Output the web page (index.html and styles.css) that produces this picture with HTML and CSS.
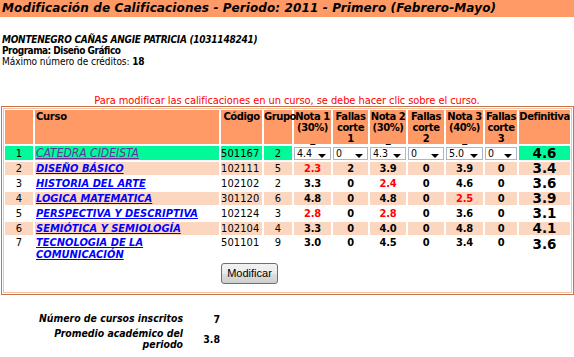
FILE: index.html
```html
<!DOCTYPE html>
<html lang="es">
<head>
<meta charset="utf-8">
<title>Modificación de Calificaciones</title>
<link rel="stylesheet" href="styles.css">
</head>
<body>
<h1 class="title">Modificación de Calificaciones - Periodo: 2011 - Primero (Febrero-Mayo)</h1>
<div class="student">
  <div class="name">MONTENEGRO CAÑAS ANGIE PATRICIA (1031148241)</div>
  <div class="prog">Programa: Diseño Gráfico</div>
  <div class="max">Máximo número de créditos: <b>18</b></div>
</div>
<p class="notice">Para modificar las calificaciones en un curso, se debe hacer clic sobre el curso.</p>
<div class="box">
  <div class="box-inner">
  <table class="grades">
    <colgroup>
      <col class="c-n"><col class="c-curso"><col class="c-cod"><col class="c-gr">
      <col class="c-n1"><col class="c-f1"><col class="c-n2"><col class="c-f2">
      <col class="c-n3"><col class="c-f3"><col class="c-def">
    </colgroup>
    <thead>
      <tr>
        <th></th>
        <th class="left">Curso</th>
        <th>Código</th>
        <th>Grupo</th>
        <th>Nota 1<br>(30%)<br>_</th>
        <th>Fallas<br>corte<br>1</th>
        <th>Nota 2<br>(30%)<br>_</th>
        <th>Fallas<br>corte<br>2</th>
        <th>Nota 3<br>(40%)<br>_</th>
        <th>Fallas<br>corte<br>3</th>
        <th>Definitiva</th>
      </tr>
    </thead>
    <tbody>
      <tr class="sel-row">
        <td class="num">1</td>
        <td class="curso"><a class="visited" href="#">CATEDRA CIDEISTA</a></td>
        <td class="cod">501167</td>
        <td class="num">2</td>
        <td class="pick"><span class="sel">4.4<i class="arr"></i></span></td>
        <td class="pick"><span class="sel">0<i class="arr"></i></span></td>
        <td class="pick"><span class="sel">4.3<i class="arr"></i></span></td>
        <td class="pick"><span class="sel">0<i class="arr"></i></span></td>
        <td class="pick"><span class="sel">5.0<i class="arr"></i></span></td>
        <td class="pick"><span class="sel">0<i class="arr"></i></span></td>
        <td class="def">4.6</td>
      </tr>
      <tr class="alt">
        <td class="num">2</td>
        <td class="curso"><a href="#">DISEÑO BÁSICO</a></td>
        <td class="cod">102111</td>
        <td class="num">5</td>
        <td class="g low">2.3</td><td class="g">2</td><td class="g">3.9</td><td class="g">0</td><td class="g">3.9</td><td class="g">0</td>
        <td class="def">3.4</td>
      </tr>
      <tr>
        <td class="num">3</td>
        <td class="curso"><a href="#">HISTORIA DEL ARTE</a></td>
        <td class="cod">102102</td>
        <td class="num">2</td>
        <td class="g">3.3</td><td class="g">0</td><td class="g low">2.4</td><td class="g">0</td><td class="g">4.6</td><td class="g">0</td>
        <td class="def">3.6</td>
      </tr>
      <tr class="alt">
        <td class="num">4</td>
        <td class="curso"><a href="#">LOGICA MATEMATICA</a></td>
        <td class="cod">301120</td>
        <td class="num">6</td>
        <td class="g">4.8</td><td class="g">0</td><td class="g">4.8</td><td class="g">0</td><td class="g low">2.5</td><td class="g">0</td>
        <td class="def">3.9</td>
      </tr>
      <tr>
        <td class="num">5</td>
        <td class="curso"><a href="#">PERSPECTIVA Y DESCRIPTIVA</a></td>
        <td class="cod">102124</td>
        <td class="num">3</td>
        <td class="g low">2.8</td><td class="g">0</td><td class="g low">2.8</td><td class="g">0</td><td class="g">3.6</td><td class="g">0</td>
        <td class="def">3.1</td>
      </tr>
      <tr class="alt">
        <td class="num">6</td>
        <td class="curso"><a href="#">SEMIÓTICA Y SEMIOLOGÍA</a></td>
        <td class="cod">102104</td>
        <td class="num">4</td>
        <td class="g">3.3</td><td class="g">0</td><td class="g">4.0</td><td class="g">0</td><td class="g">4.8</td><td class="g">0</td>
        <td class="def">4.1</td>
      </tr>
      <tr class="top">
        <td class="num">7</td>
        <td class="curso"><a href="#">TECNOLOGIA DE LA COMUNICACIÓN</a></td>
        <td class="cod">501101</td>
        <td class="num">9</td>
        <td class="g">3.0</td><td class="g">0</td><td class="g">4.5</td><td class="g">0</td><td class="g">3.4</td><td class="g">0</td>
        <td class="def">3.6</td>
      </tr>
      <tr class="btn-row">
        <td colspan="2"></td>
        <td colspan="9"><button class="btn" type="button">Modificar</button></td>
      </tr>
    </tbody>
  </table>
  </div>
</div>
<table class="summary">
  <tr><th>Número de cursos inscritos</th><td>7</td></tr>
  <tr><th>Promedio académico del periodo</th><td>3.8</td></tr>
</table>
</body>
</html>
```
FILE: styles.css
```css
html, body {
  margin: 0;
  padding: 0;
  background: #fff;
}
body {
  font-family: "DejaVu Sans Condensed", "DejaVu Sans", sans-serif;
  font-size: 10px;
  color: #000;
  width: 574px;
}
.title {
  margin: 0;
  height: 17px;
  line-height: 17px;
  background: #ff9966;
  font-family: "DejaVu Sans", Verdana, sans-serif;
  font-size: 12px;
  letter-spacing: 0.12px;
  font-weight: bold;
  font-style: italic;
  padding-left: 2px;
  white-space: nowrap;
}
.student {
  margin-top: 17px;
  padding-left: 2px;
  line-height: 11px;
  white-space: nowrap;
}
.name {
  font-weight: bold;
  font-style: italic;
  letter-spacing: -0.25px;
}
.prog {
  font-weight: bold;
  letter-spacing: -0.5px;
}
.max {
  letter-spacing: -0.05px;
}
.max b {
  letter-spacing: -0.3px;
}
.notice {
  margin: 28px 0 0;
  text-align: center;
  color: #ff0000;
  font-size: 11px;
  letter-spacing: -0.07px;
  line-height: 11px;
  white-space: nowrap;
}
.box {
  margin: 0 0 0 1px;
  width: 573px;
  box-sizing: border-box;
  border: 1px solid #c4744c;
  padding: 1px;
}
.box-inner {
  border: 1px solid #f8c2a2;
  padding-bottom: 6px;
}
.grades {
  border-collapse: separate;
  border-spacing: 2px;
  table-layout: fixed;
  width: 569px;
  margin: -1px 0 0 -1px;
}
.c-n { width: 28px; }
.c-curso { width: 184px; }
.c-cod { width: 41px; }
.c-gr { width: 28px; }
.c-n1 { width: 37px; }
.c-f1 { width: 35px; }
.c-n2 { width: 36px; }
.c-f2 { width: 36px; }
.c-n3 { width: 37px; }
.c-f3 { width: 32px; }
.c-def { width: 51px; }
.grades th {
  background: #ff9966;
  vertical-align: top;
  font-family: "DejaVu Sans", sans-serif;
  font-weight: bold;
  font-size: 10px;
  letter-spacing: -0.45px;
  line-height: 11px;
  height: 34px;
  padding: 1px 0 0;
  text-align: center;
  box-sizing: border-box;
  white-space: nowrap;
}
.grades th.left {
  text-align: left;
  padding-left: 1px;
  letter-spacing: -0.3px;
}
.grades td {
  padding: 0;
  height: 13px;
  line-height: 13px;
  text-align: center;
  vertical-align: middle;
  white-space: nowrap;
}
.grades tr.alt td {
  background: #fdd6c0;
}
.grades tr.sel-row td {
  background: #00fa9a;
  height: 14px;
}
.grades tr.sel-row td.pick {
  background: #fff;
}
.grades td.curso {
  text-align: left;
  padding-left: 1px;
}
.grades td.curso a {
  color: #0000ff;
  font-weight: bold;
  font-style: italic;
  font-size: 11px;
  line-height: 12px;
  text-decoration: underline;
}
.grades td.curso a.visited {
  color: #663399;
  font-weight: normal;
  font-size: 12px;
}
.grades td.cod {
  text-align: left;
  font-size: 11px;
  letter-spacing: 0.1px;
}
.grades td.num {
  font-size: 11px;
}
.grades td.g {
  font-weight: bold;
  font-size: 11px;
  letter-spacing: -0.2px;
}
.grades td.low {
  color: #ff0000;
}
.grades td.def {
  font-family: "DejaVu Sans", sans-serif;
  font-weight: bold;
  font-size: 13.5px;
  line-height: 13px;
}
.grades tr.top td {
  vertical-align: top;
  height: 24px;
  line-height: 12px;
}
.grades tr.top td.curso {
  white-space: normal;
}
.grades tr.top td.def {
  line-height: 15px;
}
.sel {
  display: block;
  box-sizing: border-box;
  height: 13px;
  border: 1px solid #a9b8c8;
  background: #fff;
  font-size: 10.5px;
  line-height: 11px;
  padding-left: 2px;
  text-align: left;
  position: relative;
}
.arr {
  position: absolute;
  right: 4px;
  top: 6px;
  width: 0;
  height: 0;
  border-left: 4px solid transparent;
  border-right: 4px solid transparent;
  border-top: 4px solid #000;
}
.btn-row td {
  height: 21px;
  line-height: 0;
  text-align: left;
  vertical-align: top;
}
.btn {
  font-family: "Liberation Sans", Arial, sans-serif;
  font-size: 11px;
  line-height: 19px;
  width: 57px;
  height: 21px;
  padding: 0;
  margin: 0;
  display: block;
  border: 1px solid #707070;
  border-radius: 3px;
  background: linear-gradient(#f2f2f2, #ebebeb 50%, #dddddd 51%, #cfcfcf);
  color: #000;
}
.summary {
  margin: 16px 0 0 35px;
  border-collapse: collapse;
}
.summary th {
  width: 148px;
  text-align: right;
  font-weight: bold;
  font-style: italic;
  font-size: 10.4px;
  line-height: 11px;
  padding: 2px 0;
}
.summary td {
  width: 37px;
  text-align: right;
  font-weight: bold;
  font-size: 10.5px;
  vertical-align: middle;
  padding: 0;
}
```
